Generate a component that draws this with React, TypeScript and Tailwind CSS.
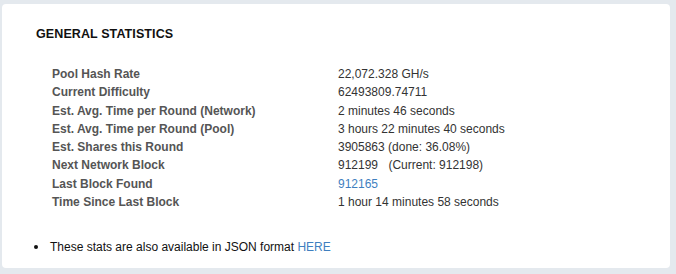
import React from 'react'

const stats: { label: string; value: React.ReactNode }[] = [
  { label: 'Pool Hash Rate', value: '22,072.328 GH/s' },
  { label: 'Current Difficulty', value: '62493809.74711' },
  { label: 'Est. Avg. Time per Round (Network)', value: '2 minutes 46 seconds' },
  { label: 'Est. Avg. Time per Round (Pool)', value: '3 hours 22 minutes 40 seconds' },
  { label: 'Est. Shares this Round', value: '3905863 (done: 36.08%)' },
  {
    label: 'Next Network Block',
    value: (
      <>
        912199 <span className="ml-[7px]">(Current: 912198)</span>
      </>
    ),
  },
  { label: 'Last Block Found', value: <a className="text-[#3f7fbf]">912165</a> },
  { label: 'Time Since Last Block', value: '1 hour 14 minutes 58 seconds' },
]

export default function App() {
  return (
    <div className="w-[676px] h-[274px] bg-[#e4e9ee] pt-[4px] pl-[2px] pr-[6px] pb-[6px] font-['Liberation_Sans',Arial,sans-serif]">
      <div className="h-full bg-white rounded-[4px] pl-[34px] pt-[23px]">
        <h2 className="text-[12.5px] font-bold text-[#111] leading-[14px] tracking-[0.1px]">GENERAL STATISTICS</h2>

        <div className="mt-[24px] pl-[16px] grid grid-cols-[286px_1fr] text-[12px] leading-[18.3px]">
          {stats.map(s => (
            <React.Fragment key={s.label}>
              <div className="font-bold text-[#555]">{s.label}</div>
              <div className="text-[#333]">{s.value}</div>
            </React.Fragment>
          ))}
        </div>

        <div className="mt-[27px] flex items-center text-[12px] leading-[18px] text-[#111]">
          <span className="w-[4px] h-[4px] rounded-full bg-[#111] -ml-[2px] mr-[12px]" />
          <span>
            These stats are also available in JSON format <a className="text-[#3f7fbf]">HERE</a>
          </span>
        </div>
      </div>
    </div>
  )
}
